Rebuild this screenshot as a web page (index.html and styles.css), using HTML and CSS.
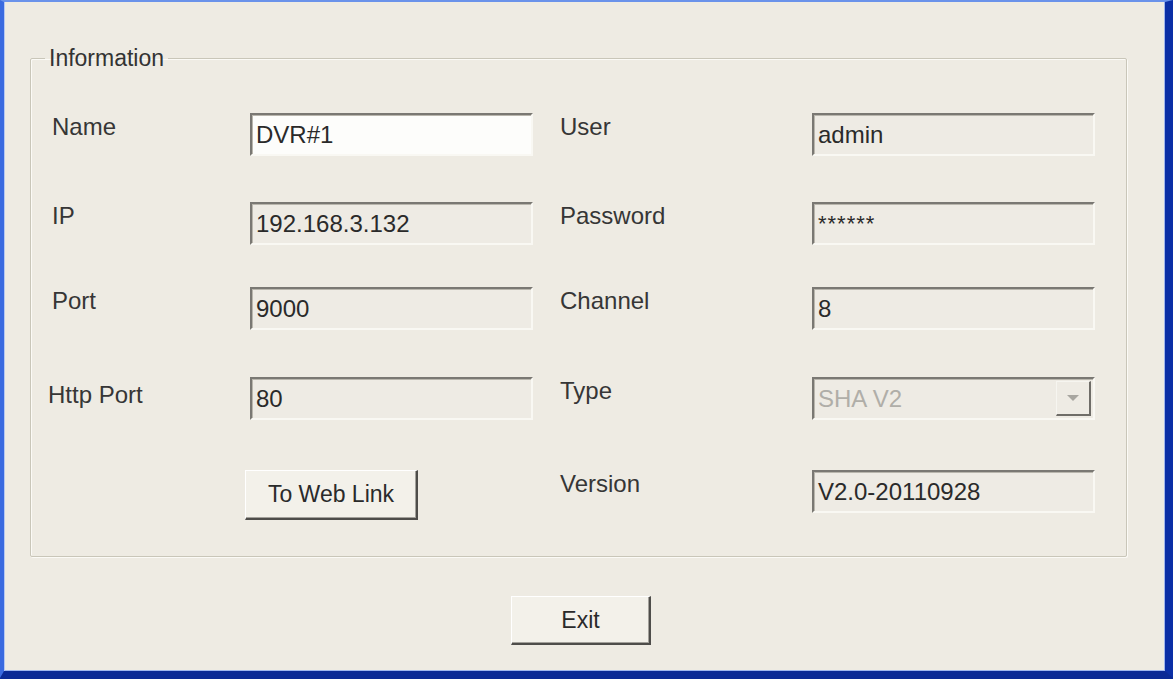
FILE: index.html
```html
<!DOCTYPE html>
<html>
<head>
<meta charset="utf-8">
<title>Information</title>
<link rel="stylesheet" href="styles.css">
</head>
<body>
<div class="window">
  <fieldset class="info">
    <legend class="info-legend">Information</legend>
    <div class="form-grid">
      <div class="lbl">Name</div>
      <div class="field field-white">DVR#1</div>
      <div class="lbl lbl-right">User</div>
      <div class="field">admin</div>

      <div class="lbl">IP</div>
      <div class="field">192.168.3.132</div>
      <div class="lbl lbl-right">Password</div>
      <div class="field field-pass">******</div>

      <div class="lbl">Port</div>
      <div class="field">9000</div>
      <div class="lbl lbl-right">Channel</div>
      <div class="field">8</div>

      <div class="lbl lbl-shift">Http Port</div>
      <div class="field">80</div>
      <div class="lbl lbl-right">Type</div>
      <div class="field field-select">
        <span class="select-text">SHA V2</span>
        <span class="select-btn">
          <svg width="14" height="8" viewBox="0 0 14 8"><path d="M1 1 L13 1 L7 7 Z" fill="#a8a6a0"/></svg>
        </span>
      </div>

      <div class="lbl"></div>
      <div class="btn-cell"><button class="btn btn-web">To Web Link</button></div>
      <div class="lbl lbl-right">Version</div>
      <div class="field">V2.0-20110928</div>
    </div>
  </fieldset>
  <div class="footer">
    <button class="btn btn-exit">Exit</button>
  </div>
</div>
</body>
</html>
```

FILE: styles.css
```css
html, body {
  margin: 0;
  padding: 0;
  background: #0b2a95;
}

body {
  width: 1173px;
  height: 679px;
  overflow: hidden;
  font-family: "Liberation Sans", Arial, sans-serif;
}

.window {
  box-sizing: border-box;
  width: 1173px;
  height: 678px;
  background: #eeebe3;
  border-style: solid;
  border-width: 2px 8px 7px 4px;
  border-color: #6a92ea #0b2fa6 #0b2a95 #3a6ae0;
  box-shadow: inset 1px 0 0 #b5c8f2, inset -1px -1px 0 #9fb6ee;
  padding: 42px 38px 0 26px;
  display: flex;
  flex-direction: column;
}

.info {
  margin: 0;
  padding: 0 0 36px 0;
  border: 1px solid #c9c6b9;
  border-radius: 2px;
  box-shadow: inset 1px 1px 0 #fbfaf6, 1px 1px 0 #fbfaf6;
  min-width: 0;
}

.info-legend {
  margin-left: 14px;
  padding: 0 4px;
  font-size: 23px;
  line-height: 28px;
  color: #333;
}

.form-grid {
  display: grid;
  grid-template-columns: 198px 283px 279px 283px;
  grid-template-rows: 89px 85px 90px 93px 50px;
  padding-left: 21px;
  margin-top: 41px;
  align-items: start;
}

.lbl {
  font-size: 24px;
  line-height: 28px;
  color: #363636;
}

.lbl-right {
  padding-left: 27px;
}

.lbl-shift {
  margin-left: -4px;
  margin-top: 4px;
}

.field {
  box-sizing: border-box;
  height: 43px;
  border-style: solid;
  border-width: 2px;
  border-color: #7a7873 #f9f8f3 #f9f8f3 #7a7873;
  box-shadow: inset 1px 1px 0 #b9b6ad;
  background: #eeebe4;
  padding: 0 4px;
  font-size: 24px;
  line-height: 39px;
  color: #2a2a2a;
  white-space: nowrap;
}

.field-white {
  background: #fdfdfb;
}

.field-pass {
  font-size: 22px;
  letter-spacing: 1px;
}

.field-select {
  display: flex;
  align-items: center;
  justify-content: space-between;
  padding-right: 2px;
}

.select-text {
  color: #b0aea8;
}

.select-btn {
  box-sizing: border-box;
  width: 35px;
  height: 35px;
  display: flex;
  align-items: center;
  justify-content: center;
  border-right: 2px solid #6f6d68;
  border-bottom: 2px solid #6f6d68;
  border-top: 1px solid #f6f5f0;
  border-left: 1px solid #f6f5f0;
}

.btn-cell {
  margin-left: -5px;
}

.btn {
  box-sizing: border-box;
  font-family: "Liberation Sans", Arial, sans-serif;
  font-size: 23px;
  color: #2a2a2a;
  background: #f3f1ea;
  border-style: solid;
  border-width: 1px 2px 2px 1px;
  border-color: #ffffff #4e4d4a #4e4d4a #ffffff;
  box-shadow: inset -1px -1px 0 #a3a19b;
  padding: 0;
  margin: 0;
}

.btn-web {
  width: 173px;
  height: 50px;
}

.footer {
  display: flex;
  justify-content: center;
  padding-top: 39px;
  padding-left: 5px;
}

.btn-exit {
  width: 140px;
  height: 49px;
}
```
